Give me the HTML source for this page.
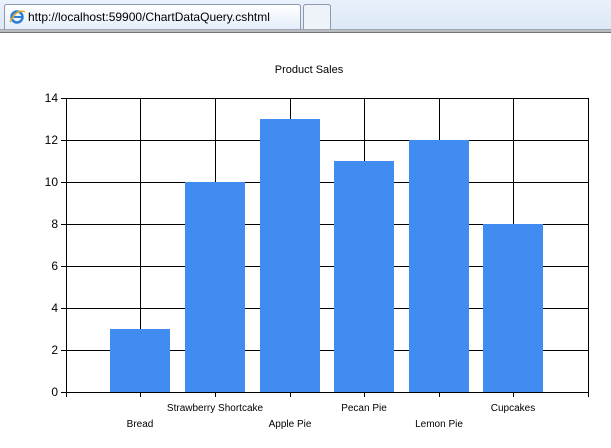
<!DOCTYPE html>
<html><head><meta charset="utf-8"><style>
html,body{margin:0;padding:0;width:611px;height:448px;overflow:hidden;background:#fff;font-family:"Liberation Sans",Arial,sans-serif}
</style></head><body>
<svg width="611" height="448" xmlns="http://www.w3.org/2000/svg" font-family="Liberation Sans, Arial, sans-serif">
<defs><linearGradient id="hb" x1="0" y1="0" x2="0" y2="1"><stop offset="0" stop-color="#e9f1fb"/><stop offset="1" stop-color="#dce8f6"/></linearGradient>
<linearGradient id="tb" x1="0" y1="0" x2="0" y2="1"><stop offset="0" stop-color="#ffffff"/><stop offset="1" stop-color="#e4eefa"/></linearGradient></defs>
<rect x="0" y="0" width="611" height="30" fill="url(#hb)"/>
<rect x="0" y="29" width="611" height="1" fill="#a0a8b0"/>
<rect x="0" y="30" width="611" height="2" fill="#b8bcc0"/>
<rect x="0" y="32" width="611" height="1" fill="#707478"/>
<path d="M4.5,29 V7 Q4.5,4.5 7,4.5 H298 Q300.5,4.5 300.5,7 V29" fill="url(#tb)" stroke="#8c9aab"/>
<path d="M303.5,29 V7 Q303.5,4.5 306,4.5 H328 Q330.5,4.5 330.5,7 V29" fill="#eef3fa" stroke="#8c9aab"/>
<g transform="translate(10,10)">
<circle cx="7" cy="7" r="5.5" fill="none" stroke="#2a7fd8" stroke-width="2.5"/>
<rect x="2" y="6" width="10" height="2" fill="#2a7fd8"/>
<path d="M0,12 Q7,-2 15,2" fill="none" stroke="#e8a820" stroke-width="1.5"/>
</g>
<text x="28" y="21" font-size="12" fill="#000">http://localhost:59900/ChartDataQuery.cshtml</text>

<text x="309" y="73" font-size="11" text-anchor="middle" fill="#000">Product Sales</text>
<g stroke="#000" stroke-width="1" fill="none" shape-rendering="crispEdges">
<path d="M61,98.5H588M61,140.5H588M61,182.5H588M61,224.5H588M61,266.5H588M61,308.5H588M61,350.5H588M61,392.5H588"/>
<path d="M66.5,98V397M140.5,98V397M215.5,98V397M290.5,98V397M364.5,98V397M439.5,98V397M513.5,98V397M588.5,98V397"/>
</g>
<g fill="#418cf0">
<rect x="110" y="329" width="60" height="63"/>
<rect x="185" y="182" width="60" height="210"/>
<rect x="260" y="119" width="60" height="273"/>
<rect x="334" y="161" width="60" height="231"/>
<rect x="409" y="140" width="60" height="252"/>
<rect x="483" y="224" width="60" height="168"/>
</g>
<g stroke="#000" stroke-width="1" fill="none" shape-rendering="crispEdges">
<path d="M61,392.5H588"/>
<path d="M140.5,392V397M215.5,392V397M290.5,392V397M364.5,392V397M439.5,392V397M513.5,392V397"/>
</g>
<g font-size="12" text-anchor="end" fill="#000">
<text x="58" y="102">14</text><text x="58" y="144">12</text><text x="58" y="186">10</text>
<text x="58" y="228">8</text><text x="58" y="270">6</text><text x="58" y="312">4</text>
<text x="58" y="354">2</text><text x="58" y="396">0</text>
</g>
<g font-size="10" text-anchor="middle" fill="#000">
<text x="140" y="427">Bread</text>
<text x="215" y="411">Strawberry Shortcake</text>
<text x="290" y="427">Apple Pie</text>
<text x="364" y="411">Pecan Pie</text>
<text x="439" y="427">Lemon Pie</text>
<text x="513" y="411">Cupcakes</text>
</g>
</svg>
</body></html>
